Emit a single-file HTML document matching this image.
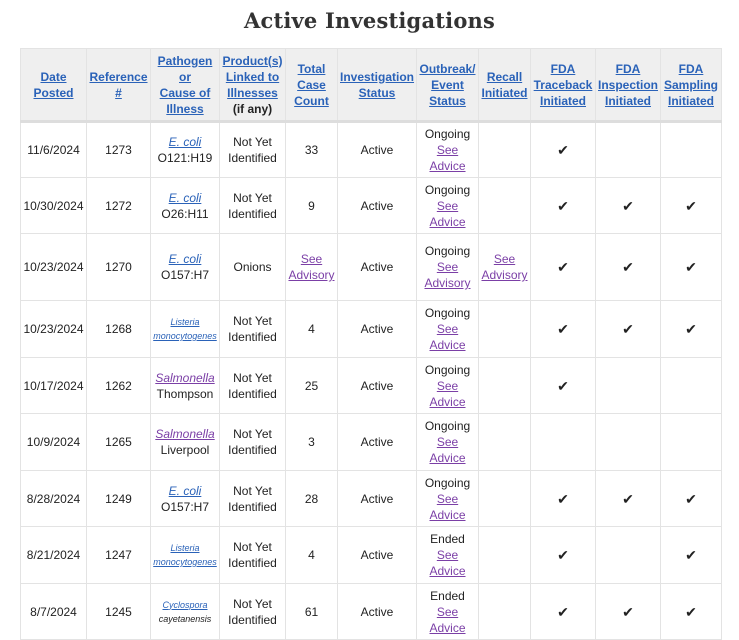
<!DOCTYPE html>
<html><head><meta charset="utf-8"><style>
body{margin:0;background:#fff;font-family:"Liberation Sans",Arial,sans-serif;color:#222;}
h1{margin:0;position:absolute;top:8px;left:0;width:739px;text-align:center;font-family:"DejaVu Serif","Liberation Serif",serif;font-weight:bold;font-size:21px;color:#333;letter-spacing:0.2px}
table{position:absolute;left:20px;top:48px;border-collapse:collapse;table-layout:fixed;width:701px;font-size:12px;line-height:16px}
td,th{border:1px solid #e3e3e3;text-align:center;vertical-align:middle;padding:0 2px;}
th{background:#efefef;font-weight:bold;height:71px;border-bottom:3px solid #ddd}
th a{color:#2a62b8;}
a{color:#2a62b8;text-decoration:underline}
a.v{color:#7b3fa6}
.sm{font-size:9px;line-height:14px}
.ck{font-size:14px;color:#222}
</style></head><body>
<h1>Active Investigations</h1>
<table>
<colgroup><col style="width:66px"><col style="width:64px"><col style="width:69px"><col style="width:66px"><col style="width:52px"><col style="width:79px"><col style="width:62px"><col style="width:52px"><col style="width:65px"><col style="width:65px"><col style="width:61px"></colgroup>
<tr><th><a>Date<br>Posted</a></th><th><a>Reference<br>#</a></th><th><a>Pathogen<br>or<br>Cause of<br>Illness</a></th><th><a>Product(s)<br>Linked to<br>Illnesses</a><br>(if any)</th><th><a>Total<br>Case<br>Count</a></th><th><a>Investigation<br>Status</a></th><th><a>Outbreak/<br>Event<br>Status</a></th><th><a>Recall<br>Initiated</a></th><th><a>FDA<br>Traceback<br>Initiated</a></th><th><a>FDA<br>Inspection<br>Initiated</a></th><th><a>FDA<br>Sampling<br>Initiated</a></th></tr>
<tr style="height:56px"><td>11/6/2024</td><td>1273</td><td><a><i>E. coli</i></a><br>O121:H19</td><td>Not Yet<br>Identified</td><td>33</td><td>Active</td><td>Ongoing<br><a class="v">See<br>Advice</a></td><td></td><td class="ck">✔</td><td></td><td></td></tr>
<tr style="height:56px"><td>10/30/2024</td><td>1272</td><td><a><i>E. coli</i></a><br>O26:H11</td><td>Not Yet<br>Identified</td><td>9</td><td>Active</td><td>Ongoing<br><a class="v">See<br>Advice</a></td><td></td><td class="ck">✔</td><td class="ck">✔</td><td class="ck">✔</td></tr>
<tr style="height:67px"><td>10/23/2024</td><td>1270</td><td><a><i>E. coli</i></a><br>O157:H7</td><td>Onions</td><td><a class="v">See<br>Advisory</a></td><td>Active</td><td>Ongoing<br><a class="v">See<br>Advisory</a></td><td><a class="v">See<br>Advisory</a></td><td class="ck">✔</td><td class="ck">✔</td><td class="ck">✔</td></tr>
<tr style="height:57px"><td>10/23/2024</td><td>1268</td><td class="sm"><a><i>Listeria<br>monocytogenes</i></a></td><td>Not Yet<br>Identified</td><td>4</td><td>Active</td><td>Ongoing<br><a class="v">See<br>Advice</a></td><td></td><td class="ck">✔</td><td class="ck">✔</td><td class="ck">✔</td></tr>
<tr style="height:56px"><td>10/17/2024</td><td>1262</td><td><a class="v"><i>Salmonella</i></a><br>Thompson</td><td>Not Yet<br>Identified</td><td>25</td><td>Active</td><td>Ongoing<br><a class="v">See<br>Advice</a></td><td></td><td class="ck">✔</td><td></td><td></td></tr>
<tr style="height:57px"><td>10/9/2024</td><td>1265</td><td><a class="v"><i>Salmonella</i></a><br>Liverpool</td><td>Not Yet<br>Identified</td><td>3</td><td>Active</td><td>Ongoing<br><a class="v">See<br>Advice</a></td><td></td><td></td><td></td><td></td></tr>
<tr style="height:56px"><td>8/28/2024</td><td>1249</td><td><a><i>E. coli</i></a><br>O157:H7</td><td>Not Yet<br>Identified</td><td>28</td><td>Active</td><td>Ongoing<br><a class="v">See<br>Advice</a></td><td></td><td class="ck">✔</td><td class="ck">✔</td><td class="ck">✔</td></tr>
<tr style="height:57px"><td>8/21/2024</td><td>1247</td><td class="sm"><a><i>Listeria<br>monocytogenes</i></a></td><td>Not Yet<br>Identified</td><td>4</td><td>Active</td><td>Ended<br><a class="v">See<br>Advice</a></td><td></td><td class="ck">✔</td><td></td><td class="ck">✔</td></tr>
<tr style="height:56px"><td>8/7/2024</td><td>1245</td><td class="sm"><a><i>Cyclospora</i></a><br><i>cayetanensis</i></td><td>Not Yet<br>Identified</td><td>61</td><td>Active</td><td>Ended<br><a class="v">See<br>Advice</a></td><td></td><td class="ck">✔</td><td class="ck">✔</td><td class="ck">✔</td></tr>
</table>
</body></html>
